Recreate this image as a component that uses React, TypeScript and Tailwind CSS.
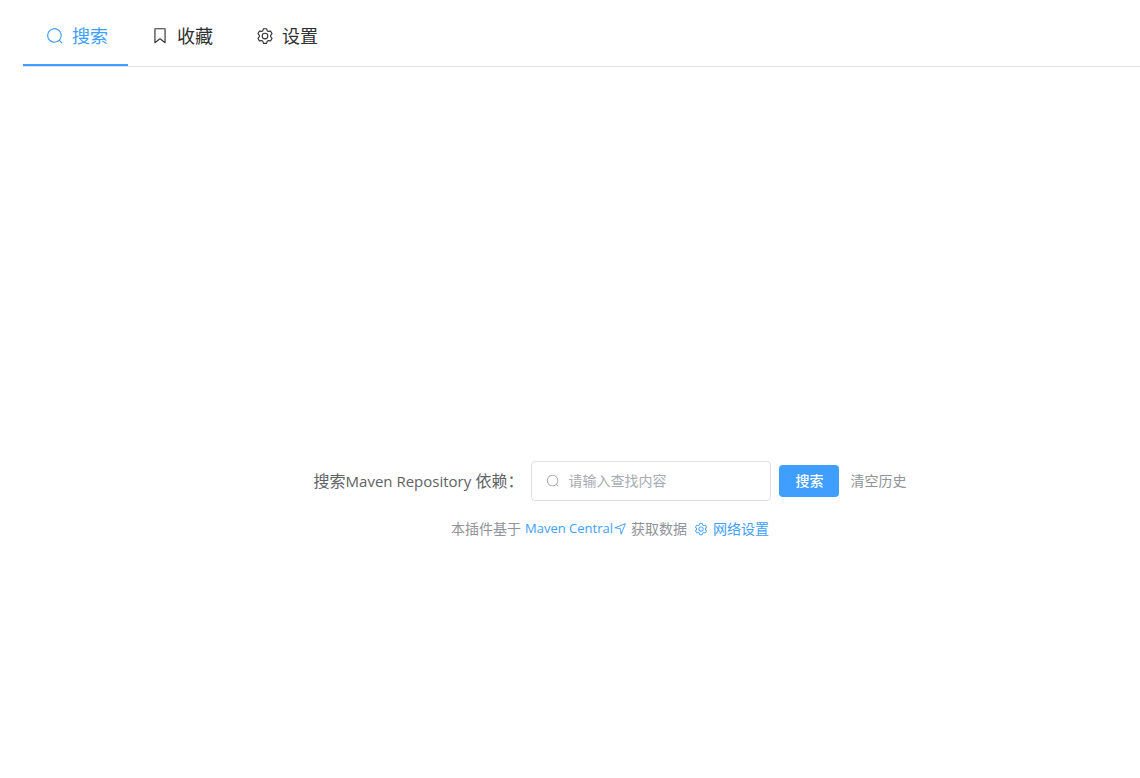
import { useState } from 'react';
import type { ReactNode } from 'react';

const paths = {
  search:
    'm795.904 750.72 124.992 124.928a32 32 0 0 1-45.248 45.248L750.656 795.904a416 416 0 1 1 45.248-45.248zM480 832a352 352 0 1 0 0-704 352 352 0 0 0 0 704z',
  bookmark:
    'M256 128v698.88l196.032-156.864a96 96 0 0 1 119.936 0L768 826.816V128H256zm-32-64h576a32 32 0 0 1 32 32v797.44a32 32 0 0 1-51.968 24.96L531.968 720a32 32 0 0 0-39.936 0L243.968 918.4A32 32 0 0 1 192 893.44V96a32 32 0 0 1 32-32z',
  setting:
    'M600.704 64a32 32 0 0 1 30.464 22.208l35.2 109.376c14.784 7.232 28.928 15.36 42.432 24.512l112.384-24.192a32 32 0 0 1 34.432 15.36L944.32 364.8a32 32 0 0 1-4.032 37.504l-77.12 85.12a357.12 357.12 0 0 1 0 49.024l77.12 85.248a32 32 0 0 1 4.032 37.504l-88.704 153.6a32 32 0 0 1-34.432 15.296L708.8 803.904c-13.44 9.088-27.648 17.28-42.368 24.512l-35.264 109.376A32 32 0 0 1 600.704 960H423.296a32 32 0 0 1-30.464-22.208L357.696 828.48a351.616 351.616 0 0 1-42.56-24.64l-112.32 24.256a32 32 0 0 1-34.432-15.36L79.68 659.2a32 32 0 0 1 4.032-37.504l77.12-85.248a357.12 357.12 0 0 1 0-48.896l-77.12-85.248A32 32 0 0 1 79.68 364.8l88.704-153.6a32 32 0 0 1 34.432-15.296l112.32 24.256c13.568-9.152 27.776-17.408 42.56-24.64l35.2-109.312A32 32 0 0 1 423.232 64H600.64zm-23.424 64H446.72l-36.352 113.088-24.512 11.968a294.113 294.113 0 0 0-34.816 20.096l-22.656 15.36-116.224-25.088-65.28 113.152 79.68 88.192-1.92 27.136a293.12 293.12 0 0 0 0 40.192l1.92 27.136-79.808 88.192 65.344 113.152 116.224-25.024 22.656 15.296a294.113 294.113 0 0 0 34.816 20.096l24.512 11.968L446.72 896h130.688l36.48-113.152 24.448-11.904a288.282 288.282 0 0 0 34.752-20.096l22.592-15.296 116.288 25.024 65.28-113.152-79.744-88.192 1.92-27.136a293.12 293.12 0 0 0 0-40.256l-1.92-27.136 79.808-88.128-65.344-113.152-116.288 24.96-22.592-15.232a287.616 287.616 0 0 0-34.752-20.096l-24.448-11.904L577.344 128zM512 320a192 192 0 1 1 0 384 192 192 0 0 1 0-384zm0 64a128 128 0 1 0 0 256 128 128 0 0 0 0-256z',
  position:
    'm249.6 417.088 319.744 43.072 39.168 310.272L845.12 178.88 249.6 417.088zm-129.024 47.168a32 32 0 0 1-7.68-61.44l777.792-311.04a32 32 0 0 1 41.6 41.6l-310.784 775.68a32 32 0 0 1-61.44-7.808L512 516.992l-391.424-52.736z',
};

type IconName = keyof typeof paths;

function Icon({ name, className }: { name: IconName; className: string }) {
  return (
    <svg viewBox="0 0 1024 1024" fill="currentColor" aria-hidden="true" className={`shrink-0 ${className}`}>
      <path d={paths[name]} />
    </svg>
  );
}

const tabs: { icon: IconName; label: string }[] = [
  { icon: 'search', label: '搜索' },
  { icon: 'bookmark', label: '收藏' },
  { icon: 'setting', label: '设置' },
];

function TextLink({ href, children }: { href: string; children: ReactNode }) {
  return (
    <a href={href} className="flex items-center text-[#409eff]">
      {children}
    </a>
  );
}

export default function App() {
  const [active, setActive] = useState(0);
  const [query, setQuery] = useState('');

  return (
    <div className="flex min-h-screen flex-col bg-white font-['Open_Sans','Noto_Sans_CJK_SC',sans-serif] text-sm text-[#909399]">
      <nav className="ml-[23px] flex border-b border-[#dcdfe6] pt-2">
        {tabs.map((tab, i) => (
          <button
            key={tab.label}
            type="button"
            onClick={() => setActive(i)}
            className={`flex h-[58px] items-center gap-[5px] border-b-2 px-5 text-lg ${
              i === active ? 'border-[#409eff] text-[#409eff]' : 'border-transparent text-[#303133]'
            }`}
          >
            <span className="flex w-6 justify-center">
              <Icon name={tab.icon} className="size-[18px]" />
            </span>
            {tab.label}
          </button>
        ))}
      </nav>

      <main className="flex flex-1 flex-col items-center justify-center gap-[18px] pt-[154px] pl-20 whitespace-nowrap">
        <form className="flex items-center" onSubmit={(e) => e.preventDefault()}>
          <label htmlFor="query" className="mr-2 text-base text-[#606266]">
            搜索<span className="text-[15px]">Maven Repository</span> 依赖：
          </label>
          <div className="mr-2 flex h-10 w-60 items-center gap-2 rounded border border-[#dcdfe6] px-[14px]">
            <Icon name="search" className="size-[14px] text-[#a8abb2]" />
            <input
              id="query"
              value={query}
              onChange={(e) => setQuery(e.target.value)}
              placeholder="请输入查找内容"
              className="min-w-0 flex-1 text-[#606266] outline-none placeholder:text-[#a8abb2]"
            />
          </div>
          <button type="submit" className="mr-[11px] h-8 rounded bg-[#409eff] px-4 font-medium text-white">
            搜索
          </button>
          <button type="button" onClick={() => setQuery('')}>
            清空历史
          </button>
        </form>
        <div className="flex items-center">
          <span className="mr-1">本插件基于</span>
          <TextLink href="#central">
            <span className="text-[13px]">Maven Central</span>
            <Icon name="position" className="size-[14px]" />
          </TextLink>
          <span className="mr-[7px] ml-1">获取数据</span>
          <TextLink href="#network">
            <Icon name="setting" className="mr-[5px] size-[14px]" />
            网络设置
          </TextLink>
        </div>
      </main>
    </div>
  );
}
